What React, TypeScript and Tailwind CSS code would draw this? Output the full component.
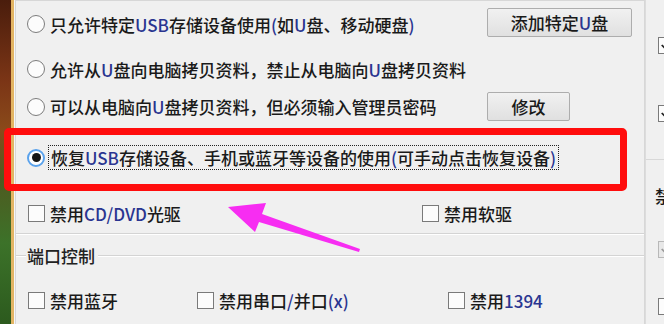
import React from "react";

const L = ({ children }: { children: React.ReactNode }) => (
  <span className="text-[#2a3590]">{children}</span>
);

function Radio({ checked = false }: { checked?: boolean }) {
  if (checked)
    return (
      <span className="flex h-[18px] w-[18px] shrink-0 items-center justify-center rounded-full border-2 border-[#5aa2ec] bg-white">
        <span className="h-[9px] w-[9px] rounded-full bg-[#151515]" />
      </span>
    );
  return <span className="h-[18px] w-[18px] shrink-0 rounded-full border-[1.5px] border-[#7c7c7c] bg-[#fcfcfc]" />;
}

function Check({ checked = false, disabled = false }: { checked?: boolean; disabled?: boolean }) {
  return (
    <span
      className={
        "relative block h-[17px] w-[17px] shrink-0 border-[1.5px] " +
        (disabled ? "border-[#b8b8b8] bg-[#e8e8e8]" : "border-[#7a7a7a] bg-[#fcfcfc]")
      }
    >
      {checked && (
        <svg viewBox="0 0 14 14" className="absolute left-[1px] top-[1px] h-[12px] w-[12px]">
          <path d="M2 7 L5 10 L11 3" fill="none" stroke={disabled ? "#9a9a9a" : "#222"} strokeWidth="2" />
        </svg>
      )}
    </span>
  );
}

const Sep = () => <div className="h-[2px] border-t border-[#d4d4d4] border-b border-b-white" />;

const Dots = () => (
  <div className="ml-[6px] mr-[10px] h-[2px] bg-[repeating-linear-gradient(90deg,#3f5f92_0px,#3f5f92_3px,transparent_3px,transparent_12px)]" />
);

export default function App() {
  return (
    <div className="relative flex h-[324px] w-[664px] overflow-hidden bg-[#f0f0f0] font-['Noto_Sans_CJK_SC',sans-serif] text-[17px] font-medium leading-none text-[#1a1a1a]">
      {/* left desktop strip */}
      <div className="flex w-[15px] shrink-0">
        <div className="w-[11px] bg-[linear-gradient(180deg,#4a1d0c_0%,#7b3516_25%,#8a4a1a_40%,#4f5a20_55%,#3c7229_75%,#2c5a1e_100%)]" />
        <div className="w-[3px] bg-[#e3b564]" />
        <div className="w-[1px] bg-[#f6f6f6]" />
      </div>

      {/* main panel */}
      <div className="flex w-[630px] shrink-0 flex-col border-l border-t border-r border-[#d7d7d7] pt-[2px]">
        <div className="flex h-[44px] items-center pl-[11px]">
          <div className="flex w-[460px] items-center gap-[5px]">
            <Radio />
            <span>
              只允许特定<L>USB</L>存储设备使用<L>(</L>如<L>U</L>盘、移动硬盘<L>)</L>
            </span>
          </div>
          <button className="mb-[4px] h-[29px] w-[145px] rounded-[2px] border border-[#adadad] bg-[linear-gradient(#f1f1f1,#e0e0e0)] leading-none text-[#1a1a1a]">
            添加特定<L>U</L>盘
          </button>
        </div>

        <div className="flex h-[48px] items-center gap-[5px] pl-[11px]">
          <Radio />
          <span>
            允许从<L>U</L>盘向电脑拷贝资料，禁止从电脑向<L>U</L>盘拷贝资料
          </span>
        </div>

        <div className="flex h-[30px] items-center pl-[11px]">
          <div className="flex w-[460px] items-center gap-[5px]">
            <Radio />
            <span>
              可以从电脑向<L>U</L>盘拷贝资料，但必须输入管理员密码
            </span>
          </div>
          <button className="h-[29px] w-[83px] rounded-[2px] border border-[#adadad] bg-[linear-gradient(#f1f1f1,#e0e0e0)] leading-none text-[#1a1a1a]">
            修改
          </button>
        </div>

        <div className="h-[9px]" />
        <Dots />

        <div className="flex h-[54px] items-center gap-[3px] pb-[2px] pl-[11px]">
          <Radio checked />
          <span className="flex h-[25px] items-center border border-dotted border-[#222] px-[2px]">
            恢复<L>USB</L>存储设备、手机或蓝牙等设备的使用<L>(</L>可手动点击恢复设备<L>)</L>
          </span>
        </div>
        <Dots />

        <div className="flex h-[47px] items-center pl-[12px] pt-[7px]">
          <div className="flex w-[394px] items-center gap-[5px]">
            <Check />
            <span>
              禁用<L>CD/DVD</L>光驱
            </span>
          </div>
          <div className="flex items-center gap-[5px]">
            <Check />
            <span>禁用软驱</span>
          </div>
        </div>

        <Sep />

        <div className="flex h-[44px] items-center">
          <div className="w-[10px]">
            <Sep />
          </div>
          <span className="ml-[1px] mr-[3px] text-[#222]">端口控制</span>
          <div className="flex-1">
            <Sep />
          </div>
        </div>

        <div className="flex h-[48px] items-center pl-[12px]">
          <div className="flex w-[169px] items-center gap-[5px]">
            <Check />
            <span>禁用蓝牙</span>
          </div>
          <div className="flex w-[251px] items-center gap-[5px]">
            <Check />
            <span>
              禁用串口<L>/</L>并口<L>(x)</L>
            </span>
          </div>
          <div className="flex items-center gap-[5px]">
            <Check />
            <span>
              禁用<L>1394</L>
            </span>
          </div>
        </div>
      </div>

      {/* right panel (cut off) */}
      <div className="flex w-[19px] shrink-0 flex-col overflow-hidden border-l border-[#dcdcdc]">
        <div className="h-[160px] shrink-0 border-b border-[#d8d8d8] pl-[12px]">
          <div className="mt-[37px]">
            <Check checked />
          </div>
          <div className="mt-[51px]">
            <Check checked />
          </div>
        </div>
        <div className="flex h-[70px] shrink-0 items-center whitespace-nowrap pl-[9px]">禁用</div>
        <div className="mt-[11px] shrink-0 pl-[12px]">
          <Check checked disabled />
        </div>
        <div className="mt-[40px] shrink-0 pl-[12px]">
          <Check />
        </div>
      </div>

      {/* red annotation box */}
      <div className="pointer-events-none absolute left-[4px] top-[128px] h-[63px] w-[623px] rounded-[5px] border-[7px] border-[#ff0d0d]" />

      {/* magenta arrow */}
      <svg className="pointer-events-none absolute left-0 top-0" width="664" height="324" viewBox="0 0 664 324">
        <polygon
          points="228,207 266,203 262,214 360,249 359,252 259,222 255,232"
          fill="#f72df2"
        />
      </svg>
    </div>
  );
}
